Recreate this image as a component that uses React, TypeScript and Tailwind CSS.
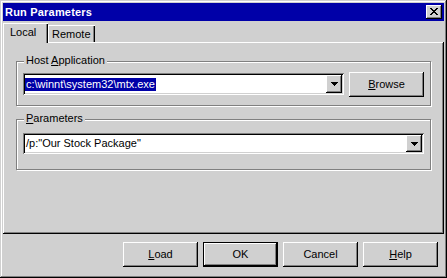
const raised =
  'shadow-[inset_-1px_-1px_#000,inset_1px_1px_#fff,inset_-2px_-2px_#808080]';

function DropArrow() {
  return (
    <svg width="7" height="4" viewBox="0 0 7 4" shapeRendering="crispEdges">
      <path d="M0 0h7v1H0z M1 1h5v1H1z M2 2h3v1H2z M3 3h1v1H3z" fill="#000" />
    </svg>
  );
}

function Combo({ width, height, children }: { width: string; height: string; children: React.ReactNode }) {
  return (
    <div
      className={`${width} ${height} flex bg-white p-[2px] shadow-[inset_1px_1px_#808080,inset_-1px_-1px_#fff,inset_2px_2px_#000,inset_-2px_-2px_#d0d0d0]`}
    >
      <div className="flex-1 flex items-center overflow-hidden whitespace-nowrap">{children}</div>
      <div className={`w-[16px] h-full bg-[#d0d0d0] flex items-center justify-center ${raised}`}>
        <DropArrow />
      </div>
    </div>
  );
}

function Button({ children, isDefault }: { children: React.ReactNode; isDefault?: boolean }) {
  return (
    <button
      type="button"
      className={
        isDefault
          ? 'w-[75px] h-[25px] bg-[#d0d0d0] flex items-center justify-center shadow-[inset_0_0_0_1px_#000,inset_-2px_-2px_#000,inset_2px_2px_#fff,inset_-3px_-3px_#808080]'
          : `w-[75px] h-[25px] bg-[#d0d0d0] flex items-center justify-center ${raised}`
      }
    >
      {children}
    </button>
  );
}

function GroupBox({ label, height, children }: { label: React.ReactNode; height: string; children: React.ReactNode }) {
  return (
    <div
      className={`relative w-[415px] ${height} border border-[#808080] shadow-[inset_1px_1px_#fff,1px_1px_#fff]`}
    >
      <span className="absolute left-[7px] top-[-8px] bg-[#d0d0d0] px-[2px]">{label}</span>
      {children}
    </div>
  );
}

export default function App() {
  return (
    <div className="w-[447px] h-[278px] bg-[#d0d0d0] p-[3px] flex flex-col font-['Liberation_Sans',Arial,sans-serif] text-[11px] leading-[13px] text-black shadow-[inset_-1px_-1px_#000,inset_1px_1px_#d0d0d0,inset_-2px_-2px_#808080,inset_2px_2px_#fff]">
      {/* title bar */}
      <div className="h-[18px] bg-[#0000a8] flex items-center justify-between pl-[2px] pr-[2px]">
        <span className="text-white font-bold tracking-[0.2px]">Run Parameters</span>
        <div className={`w-[16px] h-[14px] bg-[#d0d0d0] flex items-center justify-center ${raised}`}>
          <svg width="8" height="7" viewBox="0 0 8 7" shapeRendering="crispEdges" className="-mt-px -ml-px">
            <path
              d="M0 0h2v1H0z M6 0h2v1H6z M1 1h2v1H1z M5 1h2v1H5z M2 2h4v1H2z M3 3h2v1H3z M2 4h4v1H2z M1 5h2v1H1z M5 5h2v1H5z M0 6h2v1H0z M6 6h2v1H6z"
              fill="#000"
            />
          </svg>
        </div>
      </div>

      {/* tabs */}
      <div className="h-[21px] flex items-end relative z-10">
        <div className="h-[20px] w-[45px] -mb-px bg-[#d0d0d0] pl-[7px] pt-[3px] shadow-[inset_1px_1px_#fff,inset_-1px_0_#000,inset_-2px_0_#808080]">
          Local
        </div>
        <div className="h-[17px] w-[47px] bg-[#d0d0d0] pl-[4px] pt-[3px] shadow-[inset_1px_1px_#fff,inset_-1px_0_#000,inset_-2px_0_#808080]">
          Remote
        </div>
      </div>

      {/* panel */}
      <div className="h-[192px] pt-[19px] pl-[13px] shadow-[inset_-1px_-1px_#000,inset_1px_1px_#fff,inset_-2px_-2px_#808080]">
        <GroupBox
          height="h-[45px]"
          label={
            <>
              Host <span className="underline">A</span>pplication
            </>
          }
        >
          <div className="flex items-start gap-[5px] pt-[10px] pl-[6px]">
            <div className="mt-px">
              <Combo width="w-[321px]" height="h-[22px]">
                <span className="bg-[#0000a8] text-white px-px">c:\winnt\system32\mtx.exe</span>
              </Combo>
            </div>
            <Button>
              <span className="underline">B</span>rowse
            </Button>
          </div>
        </GroupBox>

        <div className="mt-[13px]">
          <GroupBox
            height="h-[51px]"
            label={
              <>
                <span className="underline">P</span>arameters
              </>
            }
          >
            <div className="pt-[13px] pl-[6px]">
              <Combo width="w-[401px]" height="h-[21px]">
                <span className="px-px">/p:"Our Stock Package"</span>
              </Combo>
            </div>
          </GroupBox>
        </div>
      </div>

      {/* buttons */}
      <div className="flex justify-end gap-[5px] mt-[8px] pr-[6px]">
        <Button>
          <span className="underline">L</span>oad
        </Button>
        <Button isDefault>OK</Button>
        <Button>Cancel</Button>
        <Button>
          <span className="underline">H</span>elp
        </Button>
      </div>
    </div>
  );
}
